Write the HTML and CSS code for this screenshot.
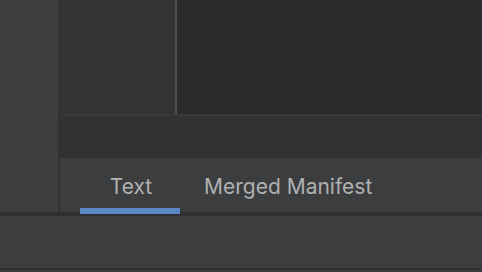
FILE: index.html
```html
<!DOCTYPE html>
<html>
<head>
<meta charset="utf-8">
<link rel="stylesheet" href="styles.css">
</head>
<body>
<div class="app">
  <div class="top">
    <div class="side"></div>
    <div class="main">
      <div class="upper">
        <div class="struct"></div>
        <div class="divider"></div>
        <div class="editor"></div>
      </div>
      <div class="hline"></div>
      <div class="strip"></div>
      <div class="tabs">
        <div class="tab active"><span class="underline"></span>Text</div>
        <div class="tab">Merged Manifest</div>
      </div>
    </div>
  </div>
  <div class="sep"></div>
  <div class="bottom"></div>
  <div class="sep2"></div>
  <div class="foot"></div>
</div>
</body>
</html>
```
FILE: styles.css
```css
html, body {
  margin: 0;
  padding: 0;
  background: #3c3d3f;
}
.app {
  width: 482px;
  height: 272px;
  display: flex;
  flex-direction: column;
  overflow: hidden;
}
.top {
  display: flex;
  height: 212px;
}
.side {
  width: 58px;
  background: #3c3d3f;
  border-right: 1px solid #333436;
}
.main {
  flex: 1;
  display: flex;
  flex-direction: column;
  background: #313234;
}
.upper {
  display: flex;
  height: 114px;
}
.struct {
  width: 116px;
  background: #323335;
}
.divider {
  width: 2px;
  background: #4b4c4e;
}
.editor {
  flex: 1;
  background: #2b2b2b;
}
.hline {
  height: 2px;
  margin-left: 1px;
  background: #393a3c;
}
.strip {
  height: 42px;
  background: #313234;
}
.tabs {
  flex: 1;
  margin-left: 1px;
  background: #3c3d3f;
  display: flex;
  padding-left: 20px;
}
.tab {
  font-family: Inter, "Liberation Sans", sans-serif;
  font-size: 21px;
  color: #afb1b3;
  display: flex;
  align-items: center;
  justify-content: center;
  padding-top: 3px;
  box-sizing: border-box;
}
.tab.active {
  width: 100px;
  padding-left: 2px;
  position: relative;
}
.underline {
  position: absolute;
  left: 0;
  right: 0;
  bottom: -2px;
  height: 6px;
  background: #5b87c5;
  z-index: 2;
}
.tab + .tab {
  padding-left: 24px;
}
.sep {
  height: 4px;
  background: #2f3032;
}
.bottom {
  height: 52px;
  background: #3c3d3f;
}
.sep2 {
  height: 2px;
  background: #2f3032;
}
.foot {
  flex: 1;
  background: #3c3d3f;
}
```
